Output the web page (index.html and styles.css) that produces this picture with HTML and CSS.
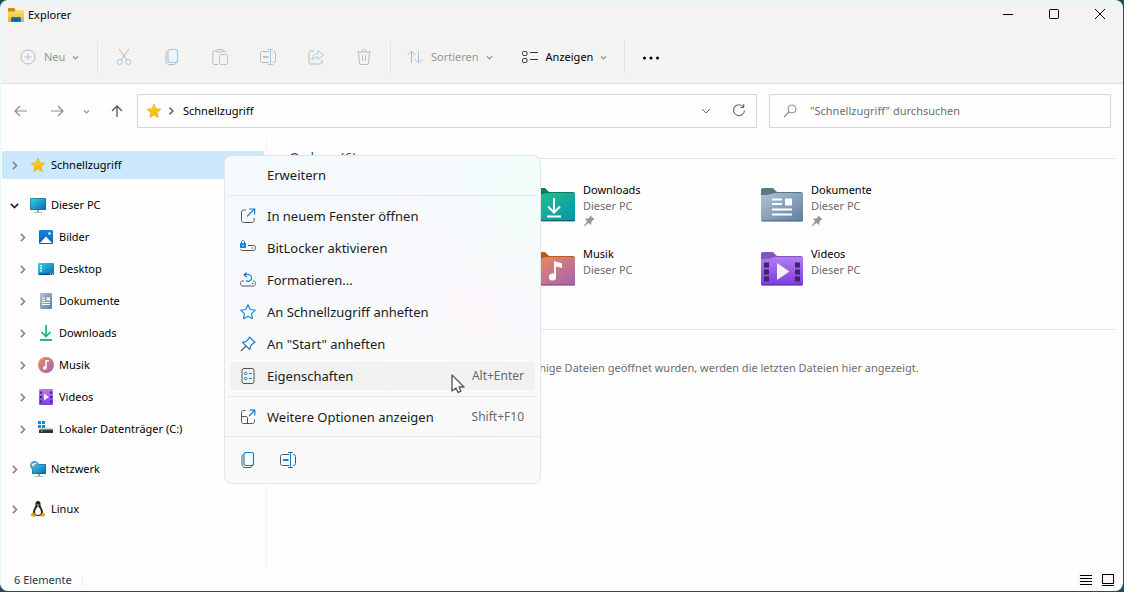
FILE: index.html
```html
<!DOCTYPE html>
<html lang="de">
<head>
    <meta charset="UTF-8">
    <meta name="viewport" content="width=device-width, initial-scale=1.0">
    <title>Explorer</title>
    <link rel="stylesheet" href="styles.css">
</head>
<body>
    <!-- shared icons -->
    <svg class="sprite" aria-hidden="true">
        <defs>
            <linearGradient id="gStar" x1="0" y1="0" x2="0" y2="1"><stop offset="0" stop-color="#ffd51e"/><stop offset="1" stop-color="#f5b400"/></linearGradient>
            <linearGradient id="gScreen" x1="0" y1="0" x2="1" y2="1"><stop offset="0" stop-color="#35d5e3"/><stop offset="1" stop-color="#0a67b5"/></linearGradient>
            <linearGradient id="gBlue" x1="0" y1="0" x2="0" y2="1"><stop offset="0" stop-color="#1484dc"/><stop offset="1" stop-color="#0560b4"/></linearGradient>
            <linearGradient id="gDoc" x1="0" y1="0" x2="1" y2="1"><stop offset="0" stop-color="#afc3d8"/><stop offset="1" stop-color="#5f7fa0"/></linearGradient>
            <linearGradient id="gDown" x1="0" y1="0" x2="1" y2="1"><stop offset="0" stop-color="#27c08c"/><stop offset="1" stop-color="#0595ab"/></linearGradient>
            <linearGradient id="gMusic" x1="0" y1="0" x2="1" y2="1"><stop offset="0" stop-color="#f38b56"/><stop offset="1" stop-color="#a062b8"/></linearGradient>
            <linearGradient id="gVideo" x1="0" y1="0" x2="0" y2="1"><stop offset="0" stop-color="#b47cf2"/><stop offset="1" stop-color="#7d3be0"/></linearGradient>
            <linearGradient id="gFolder" x1="0" y1="0" x2="0" y2="1"><stop offset="0" stop-color="#ffe070"/><stop offset="1" stop-color="#e9b22f"/></linearGradient>
        </defs>
        <symbol id="chevron-right" viewBox="0 0 16 16"><path d="M6 3.500L10.500 8 6 12.500" fill="none" stroke="currentColor" stroke-width="2"/></symbol>
        <symbol id="chevron-down" viewBox="0 0 16 16"><path d="M3.500 6L8 10.500 12.500 6" fill="none" stroke="currentColor" stroke-width="2"/></symbol>
        <symbol id="star" viewBox="0 0 16 16"><path d="M8 1l2 4.700 5 .5-3.800 3.400 1.200 5L8 12l-4.400 2.600 1.200-5L1 6.200l5-.5z" fill="url(#gStar)" stroke="#eab02a" stroke-width=".7" stroke-linejoin="round"/></symbol>
        <symbol id="copy" viewBox="0 0 16 16"><path d="M3.500 2.500C2.500 2.800 2 3.500 2 4.500V12c0 2 1.200 3.500 3.200 3.500H10c1 0 1.700-.5 2-1.500" fill="none" stroke="var(--line)"/><rect x="4" y=".5" width="9.500" height="13" rx="2" fill="none" stroke="var(--accent)" stroke-width="1.200"/></symbol>
        <symbol id="rename" viewBox="0 0 16 16"><path d="M9 2.500H2.500c-1.200 0-2 .8-2 2v7c0 1.200.8 2 2 2H9M13 2.500h.5c1.200 0 2 .8 2 2v7c0 1.200-.8 2-2 2H13" fill="none" stroke="var(--line)"/><path d="M10.500.5v15M8 .5h5M8 15.500h5" fill="none" stroke="var(--accent)"/><path d="M3 8h5.500" stroke="var(--accent)" stroke-width="2"/></symbol>
        <symbol id="pin" viewBox="0 0 12 12"><path d="M7.500.5l4 4-1.800.8-1.200 1.500L8.200 10 5.500 8 1 11.500.5 11 4 6.500 2 3.800l3-.3 1.700-1.300z" fill="#919aa2"/></symbol>
    </svg>

    <div class="window">
        <header class="titlebar">
            <svg class="icon" viewBox="0 0 16 16">
                <path d="M0 2c0-.6.400-1 1-1h5l1.500 2H15c.6 0 1 .4 1 1v4H0z" fill="#c98a12"/>
                <path d="M0 4.500h6L8 3h7.500c.3 0 .5.200.5.500V14c0 .6-.4 1-1 1H1c-.6 0-1-.4-1-1z" fill="url(#gFolder)"/>
                <path d="M3 15v-3.500C3 10.500 3.700 10 4.500 10h7c.8 0 1.500.5 1.500 1.500V15z" fill="#1673b8"/>
                <rect x="5.500" y="12" width="5" height="1.200" fill="#0b4f87"/>
            </svg>
            <h1>Explorer</h1>
            <div class="window-buttons">
                <button type="button" aria-label="Minimieren"><svg viewBox="0 0 10 10"><path d="M0 5.500h10" stroke="#000" fill="none"/></svg></button>
                <button type="button" aria-label="Maximieren"><svg viewBox="0 0 10 10"><rect x=".5" y=".5" width="9" height="9" rx=".8" stroke="#000" fill="none"/></svg></button>
                <button type="button" aria-label="Schließen"><svg viewBox="0 0 10 10"><path d="M0 0l10 10M10 0L0 10" stroke="#000" fill="none"/></svg></button>
            </div>
        </header>

        <div class="toolbar">
            <button type="button" class="tool-text new" disabled>
                <svg class="icon" viewBox="0 0 16 16"><circle cx="8" cy="8" r="7" fill="none" stroke="var(--line)"/><path d="M8 4.500v7M4.500 8h7" stroke="var(--accent)"/></svg>
                Neu
                <svg class="caret"><use href="#chevron-down"/></svg>
            </button>
            <span class="divider"></span>
            <button type="button" class="tool" aria-label="Ausschneiden" disabled><svg class="icon" viewBox="0 0 16 16"><path d="M3 0l7.800 10.800M13 0L5.200 10.800" fill="none" stroke="var(--line)"/><circle cx="3.800" cy="13" r="2.500" fill="none" stroke="var(--accent)"/><circle cx="12.200" cy="13" r="2.500" fill="none" stroke="var(--accent)"/></svg></button>
            <button type="button" class="tool" aria-label="Kopieren" disabled><svg class="icon"><use href="#copy"/></svg></button>
            <button type="button" class="tool" aria-label="Einfügen" disabled><svg class="icon" viewBox="0 0 16 16"><path d="M4.500 2H2C1.200 2 .8 2.500.8 3.200v11c0 .8.5 1.300 1.200 1.300h4M11 2h1.500c.8 0 1.200.5 1.200 1.200V4" fill="none" stroke="var(--line)"/><rect x="4.500" y=".5" width="6.500" height="2.500" rx="1" fill="none" stroke="var(--line)"/><rect x="7.500" y="5.500" width="8" height="10" rx="1.200" fill="none" stroke="var(--accent)"/></svg></button>
            <button type="button" class="tool" aria-label="Umbenennen" disabled><svg class="icon"><use href="#rename"/></svg></button>
            <button type="button" class="tool" aria-label="Freigeben" disabled><svg class="icon" viewBox="0 0 16 16"><path d="M6 2H3C1.800 2 1 2.800 1 4v9c0 1.200.8 2 2 2h9c1.200 0 2-.8 2-2v-2" fill="none" stroke="var(--line)"/><path d="M10 1.500L15.300 6 10 10.500V8C7 8 5.500 9 4 11c.2-4 2.500-6.600 6-6.800z" fill="none" stroke="var(--accent)" stroke-linejoin="round"/></svg></button>
            <button type="button" class="tool" aria-label="Löschen" disabled><svg class="icon" viewBox="0 0 16 16"><path d="M1 3h14M5.800 3c0-3.300 4.400-3.300 4.400 0M2.500 3l1 11c.1 1 .7 1.500 1.500 1.500h6c.8 0 1.400-.5 1.500-1.500l1-11M6.500 6.500v5.500M9.500 6.500v5.500" fill="none" stroke="var(--line)"/></svg></button>
            <span class="divider"></span>
            <button type="button" class="tool-text sort" disabled>
                <svg class="icon" viewBox="0 0 16 16"><path d="M4.500 14V2M.5 6l4-4 4 4" fill="none" stroke="var(--line)"/><path d="M11.500 2v12M7.500 10l4 4 4-4" fill="none" stroke="var(--accent)"/></svg>
                Sortieren
                <svg class="caret"><use href="#chevron-down"/></svg>
            </button>
            <button type="button" class="tool-text view">
                <svg class="icon" viewBox="0 0 16 16"><g fill="none" stroke="#333"><rect x=".5" y="2.500" width="4.500" height="4" rx="1.200"/><rect x=".5" y="9.500" width="4.500" height="4" rx="1.200"/><path d="M8 3.500h8M8 10.500h8"/></g></svg>
                Anzeigen
                <svg class="caret"><use href="#chevron-down"/></svg>
            </button>
            <span class="divider"></span>
            <button type="button" class="tool" aria-label="Mehr anzeigen"><svg class="icon" viewBox="0 0 16 16"><circle cx="1.500" cy="9" r="1.500"/><circle cx="8" cy="9" r="1.500"/><circle cx="14.500" cy="9" r="1.500"/></svg></button>
        </div>

        <div class="navbar">
            <div class="history">
                <button type="button" aria-label="Zurück"><svg class="icon" viewBox="0 0 16 16"><path d="M14 8H2M7 3L2 8l5 5" fill="none" stroke="currentColor" stroke-width="1.200"/></svg></button>
                <button type="button" aria-label="Vorwärts"><svg class="icon" viewBox="0 0 16 16"><path d="M2 8h12M9 3l5 5-5 5" fill="none" stroke="currentColor" stroke-width="1.200"/></svg></button>
                <button type="button" class="small" aria-label="Zuletzt besuchte Orte"><svg class="caret"><use href="#chevron-down"/></svg></button>
                <button type="button" class="up" aria-label="Nach oben"><svg class="icon" viewBox="0 0 16 16"><path d="M8 14V3M3 8l5-5 5 5" fill="none" stroke="currentColor" stroke-width="1.300"/></svg></button>
            </div>
            <nav class="address" aria-label="Adressleiste">
                <svg class="icon"><use href="#star"/></svg>
                <svg class="crumb"><use href="#chevron-right"/></svg>
                <a href="#">Schnellzugriff</a>
                <button type="button" aria-label="Vorherige Orte"><svg class="icon" viewBox="0 0 16 16"><path d="M4 6l4 4 4-4" fill="none" stroke="currentColor"/></svg></button>
                <button type="button" aria-label="Aktualisieren"><svg class="icon" viewBox="0 0 16 16"><path d="M12.500 4A5.500 5.500 0 1 0 13.500 7.500M12.700 1v3.500H9.200" fill="none" stroke="currentColor" stroke-width="1.100"/></svg></button>
            </nav>
            <label class="search">
                <svg class="icon" viewBox="0 0 16 16"><circle cx="10" cy="6" r="4" fill="none" stroke="#8f8896"/><path d="M7 9l-5 5" stroke="#8f8896" stroke-width="1.200"/></svg>
                <input type="search" placeholder="&quot;Schnellzugriff&quot; durchsuchen" aria-label="Schnellzugriff durchsuchen">
            </label>
        </div>

        <div class="content">
            <nav class="sidebar" aria-label="Navigationsbereich">
                <ul>
                    <li><a href="#" class="row selected"><svg class="chevron"><use href="#chevron-right"/></svg><svg class="icon"><use href="#star"/></svg>Schnellzugriff</a></li>
                </ul>
                <ul>
                    <li><a href="#" class="row"><svg class="chevron open"><use href="#chevron-down"/></svg><svg class="icon" viewBox="0 0 16 16"><rect y="1" width="16" height="12" rx="1" fill="#17627f"/><rect x=".6" y="1.600" width="14.800" height="10.800" rx=".5" fill="url(#gScreen)"/><path d="M7 13h2v2H7zM4 15h8v.8H4z" fill="#9aa7b0"/></svg>Dieser PC</a></li>
                    <li><a href="#" class="row child"><svg class="chevron"><use href="#chevron-right"/></svg><svg class="icon" viewBox="0 0 16 16"><rect x="1" y="1" width="14" height="14" rx="1.200" fill="url(#gBlue)"/><path d="M2 14l6-6.500 6 6.500z" fill="#fff"/><circle cx="11.500" cy="4.500" r="1.300" fill="#e4f3ff"/></svg>Bilder</a></li>
                    <li><a href="#" class="row child"><svg class="chevron"><use href="#chevron-right"/></svg><svg class="icon" viewBox="0 0 16 16"><rect y="2" width="16" height="12" rx="1" fill="url(#gScreen)"/><path d="M2 4h2v1.500H2zM2 6.500h2V8H2zM2 9h2v1.500H2z" fill="#d6fbff"/><path d="M1 12.500h14V14H1z" fill="#0c4f8d"/><path d="M12 13h1M14 13h1" stroke="#fff"/></svg>Desktop</a></li>
                    <li><a href="#" class="row child"><svg class="chevron"><use href="#chevron-right"/></svg><svg class="icon" viewBox="0 0 16 16"><rect x="2" y="0" width="12" height="16" rx="1" fill="url(#gDoc)"/><path d="M4 5h3M4 7.500h3M4 9.500h8M4 11.500h8" stroke="#fff"/><rect x="8.500" y="4.500" width="3.500" height="3" fill="#fff"/></svg>Dokumente</a></li>
                    <li><a href="#" class="row child"><svg class="chevron"><use href="#chevron-right"/></svg><svg class="icon" viewBox="0 0 16 16"><path d="M8 0v11M3.500 7L8 11.500 12.500 7" fill="none" stroke="#1bb08e" stroke-width="1.700"/><path d="M2 15h12" stroke="#12a08e" stroke-width="1.700"/></svg>Downloads</a></li>
                    <li><a href="#" class="row child"><svg class="chevron"><use href="#chevron-right"/></svg><svg class="icon" viewBox="0 0 16 16"><circle cx="8" cy="8" r="8" fill="url(#gMusic)"/><circle cx="6.800" cy="10.800" r="1.900" fill="#fff"/><path d="M8 11V3.800h3" stroke="#fff" stroke-width="1.500" fill="none"/></svg>Musik</a></li>
                    <li><a href="#" class="row child"><svg class="chevron"><use href="#chevron-right"/></svg><svg class="icon" viewBox="0 0 16 16"><rect x="1" width="14" height="16" rx="1" fill="url(#gVideo)"/><path d="M3 2.500v12M13 2.500v12" stroke="#432079" stroke-width="2" stroke-dasharray="2 2.500"/><path d="M6 4.500v7l5-3.500z" fill="#f6efff"/></svg>Videos</a></li>
                    <li><a href="#" class="row child"><svg class="chevron"><use href="#chevron-right"/></svg><svg class="icon" viewBox="0 0 16 16"><path d="M0 0h3v3H0zM4 0h3v3H4zM0 4h3v3H0zM4 4h3v3H4z" fill="#1486d8"/><path d="M3 7h11l1 2H1z" fill="#cfd4d6"/><rect x="1" y="8.500" width="14" height="3.500" rx=".5" fill="#30363a"/><rect x="3" y="9.500" width="2" height="1" fill="#4ce06b"/></svg>Lokaler Datenträger (C:)</a></li>
                </ul>
                <ul>
                    <li><a href="#" class="row"><svg class="chevron"><use href="#chevron-right"/></svg><svg class="icon" viewBox="0 0 16 16"><rect x="2" y="3" width="14" height="10" rx=".8" fill="#135e92"/><rect x="2.600" y="3.600" width="12.800" height="8.800" fill="url(#gScreen)"/><path d="M8 13h2v2H8zM5 15h8v.8H5z" fill="#9aa7b0"/><circle cx="4.500" cy="4.500" r="4.500" fill="#4a9dc9"/><path d="M1.500 2c2 1.500 3-1 5.500 0-1 1.500-3 1.500-3 3.500-1.500.5-2.500-1-2.500-3.500z" fill="#c9e8f2"/></svg>Netzwerk</a></li>
                </ul>
                <ul>
                    <li><a href="#" class="row"><svg class="chevron"><use href="#chevron-right"/></svg><svg class="icon" viewBox="0 0 16 16"><path d="M8 0C6.200 0 5.300 1.300 5.500 3.500 5.700 6 3 8 3 11.500 3 14 5 15 8 15s5-1 5-3.500C13 8 10.300 6 10.500 3.500 10.700 1.300 9.800 0 8 0z" fill="#222"/><path d="M8 5.500C6.500 6.500 5 9 5 11.500c0 1.500 1.200 2.500 3 2.500s3-1 3-2.500c0-2.500-1.500-5-3-6z" fill="#fff"/><path d="M6.500 3.800L8 3.200l1.500.6L8 5.200z" fill="#f0b323"/><path d="M3 11l3 3c0 1.500-1 2-2.200 1.800L1 15c-.6-.3 0-1.200.2-2zM13 11l-2.500 3c0 1.500 1 2 2 1.800L15 14.500c.4-.5-.3-1-.5-2z" fill="#e0a21b"/></svg>Linux</a></li>
                </ul>
            </nav>

            <main class="files">
                <section>
                    <h2>Ordner (6)</h2>
                    <ul class="tiles">
                        <li class="tile">
                            <svg class="folder" viewBox="0 0 42 34"><path d="M0 2c0-1 .7-2 2-2h10l4 4h24c1 0 2 1 2 2v8H0z" fill="#0b7f5b"/><path d="M0 7c5 0 9 0 12-1.500C14 4.500 15 5 17 5h23.500c1 0 1.500.5 1.500 1.500V32c0 1-.5 1.500-1.500 1.500h-39C.5 33.500 0 33 0 32z" fill="url(#gDown)"/><path d="M0 32.500h42" stroke="#0a6570"/><path d="M21 10v14M15 18.500l6 6 6-6M14 28.500h14" fill="none" stroke="#fff" stroke-width="2"/></svg>
                            <div><a href="#">Downloads</a><span>Dieser PC</span><svg class="pin"><use href="#pin"/></svg></div>
                        </li>
                        <li class="tile">
                            <svg class="folder" viewBox="0 0 42 34"><path d="M0 2c0-1 .7-2 2-2h10l4 4h24c1 0 2 1 2 2v8H0z" fill="#587886"/><path d="M0 7c5 0 9 0 12-1.500C14 4.500 15 5 17 5h23.500c1 0 1.500.5 1.500 1.500V32c0 1-.5 1.500-1.500 1.500h-39C.5 33.500 0 33 0 32z" fill="url(#gDoc)"/><path d="M1 32.800h40" stroke="#4e6c8a"/><path d="M11 11.500h10M11 16h10M11 21.500h20M11 26.500h20" stroke="#fff" stroke-width="2"/><rect x="24" y="10.500" width="7" height="7" rx=".8" fill="#fff"/></svg>
                            <div><a href="#">Dokumente</a><span>Dieser PC</span><svg class="pin"><use href="#pin"/></svg></div>
                        </li>
                        <li class="tile">
                            <svg class="folder" viewBox="0 0 42 34"><path d="M0 2c0-1 .7-2 2-2h10l4 4h24c1 0 2 1 2 2v8H0z" fill="#b95f15"/><path d="M0 7c5 0 9 0 12-1.500C14 4.500 15 5 17 5h23.500c1 0 1.500.5 1.500 1.500V32c0 1-.5 1.500-1.500 1.500h-39C.5 33.500 0 33 0 32z" fill="url(#gMusic)"/><path d="M0 32.800h42" stroke="#804a76"/><circle cx="19.500" cy="25" r="3.600" fill="#fff"/><path d="M21 25V9l8 2.500V16l-6-1.500V25z" fill="#fff"/></svg>
                            <div><a href="#">Musik</a><span>Dieser PC</span></div>
                        </li>
                        <li class="tile">
                            <svg class="folder" viewBox="0 0 42 34"><path d="M0 2c0-1 .7-2 2-2h10l4 4h24c1 0 2 1 2 2v8H0z" fill="#8058b8"/><path d="M0 7c5 0 9 0 12-1.500C14 4.500 15 5 17 5h23.500c1 0 1.500.5 1.500 1.500V32c0 1-.5 1.500-1.500 1.500h-39C.5 33.500 0 33 0 32z" fill="url(#gVideo)"/><path d="M1 32.800h40" stroke="#5f30a0"/><path d="M3 10.500h5v5H3zM3 17.500h5v5H3zM3 24.500h5v5H3zM34 10.500h5v5h-5zM34 17.500h5v5h-5zM34 24.500h5v5h-5z" fill="#3f2468"/><path d="M16 11v17l12.500-8.500z" fill="#f4f0fa"/></svg>
                            <div><a href="#">Videos</a><span>Dieser PC</span></div>
                        </li>
                    </ul>
                </section>
                <section class="recent">
                    <p>Nachdem einige Dateien geöffnet wurden, werden die letzten Dateien hier angezeigt.</p>
                </section>
            </main>
        </div>

        <footer class="statusbar">
            <span class="count">6 Elemente</span>
            <div class="layouts">
                <button type="button" aria-label="Details"><svg viewBox="0 0 12 12"><path d="M0 1.500h12M0 4.500h12M0 7.500h12M0 10.500h12" stroke="#000"/></svg></button>
                <button type="button" aria-label="Große Symbole"><svg viewBox="0 0 12 12"><rect x=".5" y=".5" width="11" height="9" fill="none" stroke="#000"/><path d="M0 11.500h12" stroke="#000"/></svg></button>
            </div>
        </footer>
    </div>

    <div class="menu" role="menu">
        <div class="menu-items">
            <button type="button" role="menuitem"><span class="icon"></span>Erweitern</button>
            <hr>
            <button type="button" role="menuitem"><svg class="icon" viewBox="0 0 16 16"><path d="M6 2H3.500C2 2 1.500 2.800 1.500 4v8.500c0 1.200.8 2 2 2H12c1.200 0 2-.8 2-2V10" fill="none" stroke="var(--line)"/><path d="M7 8.500L14.500 1M9 1h5.700v5.500" fill="none" stroke="var(--accent)" stroke-width="1.200"/></svg>In neuem Fenster öffnen</button>
            <button type="button" role="menuitem"><svg class="icon" viewBox="0 0 16 16"><path d="M8 5.500h5.500c1.200 0 2 .7 2 2.300s-.8 2.700-2 2.700h-11c-1.200 0-2-.7-2-1.500" fill="none" stroke="var(--line)"/><circle cx="12.500" cy="8" r=".7" fill="var(--line)"/><rect y="3" width="6" height="5" rx=".7" fill="var(--accent)"/><path d="M1.500 3.500V2c0-2 3-2 3 0v1.500" fill="none" stroke="var(--accent)"/><path d="M3 4.500v2" stroke="#fff"/></svg>BitLocker aktivieren</button>
            <button type="button" role="menuitem"><svg class="icon" viewBox="0 0 16 16"><path d="M4 9H2.500C1.300 9 .5 10 .5 11.500s.8 2.500 2 2.500h11c1.200 0 2-1 2-2.500S14.700 9 13.500 9H13" fill="none" stroke="var(--line)"/><circle cx="12.500" cy="11.500" r=".7" fill="var(--line)"/><path d="M6 8.500C8 10.500 11.500 9 11.500 6S8.500 1.500 4.500 3M6.500.5L4 3l2.800 2" fill="none" stroke="var(--accent)" stroke-width="1.200"/></svg>Formatieren...</button>
            <button type="button" role="menuitem"><svg class="icon" viewBox="0 0 16 16"><path d="M8 .8l2.200 4.700 5.100.7-3.700 3.500.9 5.100L8 12.300l-4.500 2.500.9-5.100L.7 6.200l5.100-.7z" fill="none" stroke="var(--accent)" stroke-width="1.100" stroke-linejoin="round"/></svg>An Schnellzugriff anheften</button>
            <button type="button" role="menuitem"><svg class="icon" viewBox="0 0 16 16"><path d="M9.500 1l5.500 5.500-1.500.5-2.800 2.800-1 3.700L2.500 6.300l3.700-1L9 2.500z" fill="none" stroke="var(--accent)" stroke-width="1.200" stroke-linejoin="round"/><path d="M6 10L.8 15.200" stroke="var(--line)" stroke-width="1.200"/></svg>An "Start" anheften</button>
            <button type="button" role="menuitem" class="active">
                <svg class="icon" viewBox="0 0 16 16"><rect x="2" y=".5" width="12" height="15" rx="2" fill="none" stroke="var(--line)"/><path d="M9 5.500h3M9 10.500h3" stroke="var(--accent)"/><circle cx="5.700" cy="5.500" r="1.200" fill="none" stroke="var(--accent)"/><circle cx="5.700" cy="10.500" r="1.200" fill="none" stroke="var(--accent)"/></svg>Eigenschaften<kbd>Alt+Enter</kbd>
                <svg class="cursor" viewBox="0 0 14 20"><path d="M1 1v16l4-3 2 4.500 3-1.300L8 13h5z" fill="#fff" stroke="#5b5b66" stroke-width="1.400" stroke-linejoin="round"/></svg>
            </button>
            <hr>
            <button type="button" role="menuitem"><svg class="icon" viewBox="0 0 16 16"><path d="M5.500 1.500H3.500c-1.200 0-2 .8-2 2v9c0 1.200.8 2 2 2h9c1.200 0 2-.8 2-2v-2M1.500 7.500H6c1 0 1.500.5 1.500 1.500v5.500" fill="none" stroke="var(--line)"/><path d="M9 7l5.500-5.500M9.500 1.200h5.300v5.300" fill="none" stroke="var(--accent)" stroke-width="1.200"/></svg>Weitere Optionen anzeigen<kbd>Shift+F10</kbd></button>
        </div>
        <div class="menu-actions">
            <button type="button" aria-label="Kopieren"><svg class="icon"><use href="#copy"/></svg></button>
            <button type="button" aria-label="Umbenennen"><svg class="icon"><use href="#rename"/></svg></button>
        </div>
    </div>
</body>
</html>
```

FILE: styles.css
```css
* {
    margin: 0;
    padding: 0;
    box-sizing: border-box;
}

body {
    --line: #555;
    --accent: #1a80d0;
    height: 100vh;
    padding: 0 1px 1px 0;
    background: #234d5e;
    color: #000;
    font-family: 'Noto Sans', 'Open Sans', sans-serif;
    font-size: 11px;
    line-height: 16px;
    overflow: hidden;
}

.sprite {
    position: absolute;
    width: 0;
    height: 0;
}

ul {
    list-style: none;
}

a {
    color: inherit;
    text-decoration: none;
}

button {
    display: flex;
    align-items: center;
    justify-content: center;
    background: none;
    border: none;
    color: inherit;
    font: inherit;
}

svg {
    display: block;
    flex-shrink: 0;
}

.icon {
    width: 16px;
    height: 16px;
    flex-shrink: 0;
}

.caret {
    width: 9px;
    height: 9px;
    color: #909090;
}

.window {
    display: flex;
    flex-direction: column;
    height: 100%;
    background: #fefefe;
    border-top: 1px solid #dff6fb;
    border-left: 1px solid #e4f7fb;
    border-radius: 8px;
    overflow: hidden;
}

/* title bar */
.titlebar {
    display: flex;
    align-items: center;
    gap: 4px;
    height: 28px;
    padding-left: 7px;
    background: #f3f3f2;
}

.titlebar h1 {
    font-size: 11px;
    font-weight: 400;
}

.window-buttons {
    display: flex;
    align-self: flex-start;
    margin-left: auto;
}

.window-buttons button {
    width: 46px;
    height: 26px;
}

.window-buttons svg {
    width: 10px;
    height: 10px;
}

/* command bar */
.toolbar {
    display: flex;
    align-items: center;
    height: 55px;
    padding: 2px 0 0 19px;
    background: #f3f3f2;
    border-bottom: 1px solid #dedede;
}

.toolbar button:disabled {
    --line: #b9b9b9;
    --accent: #a5c8e4;
    color: #969696;
}

.tool {
    width: 48px;
    height: 32px;
}

.tool-text {
    gap: 8px;
    height: 32px;
}

.tool-text .caret {
    margin-left: -2px;
}

.new {
    justify-content: flex-start;
    width: 75px;
}

.sort,
.view {
    padding: 0 14px;
}

.divider {
    width: 1px;
    height: 32px;
    margin: 0 2px;
    background: #e2e2e2;
}

/* address row */
.navbar {
    display: grid;
    grid-template-columns: auto 620fr 354fr;
    align-items: center;
    height: 54px;
    padding: 0 12px 0 2px;
}

.history {
    display: flex;
    color: #8a8a8a;
}

.history button {
    width: 36px;
    height: 32px;
}

.history .small {
    width: 22px;
}

.history .up {
    width: 40px;
    color: #555;
}

.address,
.search {
    display: flex;
    align-items: center;
    height: 34px;
    border: 1px solid #d6d6d6;
}

.address {
    padding: 0 1px 0 8px;
    color: #666;
}

.crumb {
    width: 12px;
    height: 12px;
    margin: 0 6px 0 3px;
}

.address a {
    margin-right: auto;
    color: #000;
}

.address button {
    width: 33px;
    height: 32px;
}

.search {
    gap: 12px;
    margin-left: 12px;
    padding: 0 12px;
}

.search input {
    flex: 1;
    min-width: 0;
    border: none;
    outline: none;
    background: none;
    font: inherit;
}

.search input::placeholder {
    color: #6d6d72;
}

/* main area */
.content {
    display: flex;
    flex: 1;
    min-height: 0;
}

.sidebar {
    display: flex;
    flex-direction: column;
    gap: 12px;
    width: 266px;
    padding: 13px 2px 0 1px;
    border-right: 1px solid #f4f4f4;
}

.sidebar ul {
    display: flex;
    flex-direction: column;
    gap: 4px;
}

.row {
    display: flex;
    align-items: center;
    height: 28px;
    padding-left: 6px;
    border-radius: 2px;
}

.row.child {
    padding-left: 14px;
}

.row.selected {
    background: #cce8ff;
}

.row .icon {
    margin: 0 5px 0 9px;
}

.chevron {
    width: 13px;
    height: 13px;
    color: #858585;
}

.chevron.open {
    color: #222;
}

.files {
    flex: 1;
    min-width: 0;
    padding: 9px 8px 0 22px;
}

.files h2 {
    display: flex;
    align-items: center;
    gap: 8px;
    height: 22px;
    color: #3a4a8c;
    font-size: 14px;
    font-weight: 400;
    white-space: nowrap;
}

.files h2::after {
    content: "";
    flex: 1;
    height: 1px;
    background: #e4e4e4;
}

.tiles {
    display: grid;
    grid-template-columns: repeat(2, 228px);
    grid-auto-rows: 64px;
    height: 160px;
    padding: 13px 0 0 244px;
}

.tile {
    display: flex;
    gap: 8px;
}

.tile a,
.tile span {
    display: block;
}

.tile span {
    color: #6d6d6d;
}

.folder {
    width: 42px;
    height: 34px;
    margin-top: 6px;
}

.pin {
    width: 12px;
    height: 12px;
    margin-top: 1px;
}

.recent {
    padding: 30px 8px 0 0;
    border-top: 1px solid #e4e4e4;
    color: #6d6d6d;
    text-align: center;
}

/* status bar */
.statusbar {
    display: flex;
    align-items: center;
    justify-content: space-between;
    height: 22px;
    padding: 0 7px 0 13px;
    color: #26384f;
}

.count {
    padding-right: 10px;
    border-right: 1px solid #eee;
    line-height: 14px;
}

.layouts {
    display: flex;
    gap: 6px;
}

.layouts button {
    width: 16px;
    height: 16px;
    background: #f7f7f7;
}

.layouts svg {
    width: 12px;
    height: 12px;
}

/* context menu */
.menu {
    position: absolute;
    top: 155px;
    left: 224px;
    width: 317px;
    border: 1px solid #e3e6e7;
    border-radius: 8px;
    background:
        radial-gradient(circle at 100% 10%, #f1fdfa 0, transparent 30%),
        radial-gradient(circle at 80% 45%, #fcf8fc 0, transparent 50%),
        linear-gradient(to bottom, #f4f9fc 0%, #f8fafc 50%, #fafafa 75%);
    color: #1b1b1b;
    font-size: 13px;
}

.menu-items {
    display: flex;
    flex-direction: column;
    gap: 4px;
    padding: 5px;
}

.menu-items button {
    position: relative;
    justify-content: flex-start;
    gap: 11px;
    height: 28px;
    padding: 0 11px 0 10px;
    border-radius: 4px;
}

.menu-items .active {
    background: #f1f1f2;
}

.menu hr {
    height: 1px;
    margin: 2px -2px;
    border: none;
    background: #e4e7e8;
}

.menu kbd {
    margin-left: auto;
    color: #686868;
    font-family: inherit;
    font-size: 12px;
}

.cursor {
    position: absolute;
    top: 12px;
    right: 70px;
    width: 14px;
    height: 20px;
}

.menu-actions {
    display: flex;
    gap: 8px;
    padding: 7px;
    border-top: 1px solid #e4e7e8;
}

.menu-actions button {
    width: 32px;
    height: 32px;
}
```
